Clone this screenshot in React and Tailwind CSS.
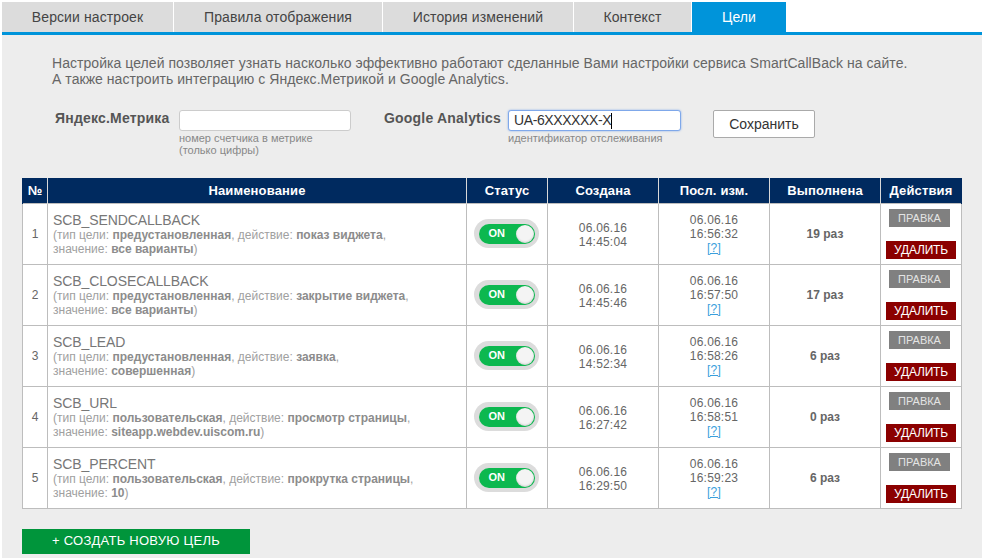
import React from 'react';

const tabs = [
  { label: 'Версии настроек', width: 'w-[171px]' },
  { label: 'Правила отображения', width: 'w-[208px]' },
  { label: 'История изменений', width: 'w-[190px]' },
  { label: 'Контекст', width: 'w-[117px]' },
  { label: 'Цели', width: 'w-[94px]', active: true },
];

const goals = [
  { name: 'SCB_SENDCALLBACK', type: 'предустановленная', action: 'показ виджета', value: 'все варианты', created: '14:45:04', createdDate: '06.06.16', changed: '16:56:32', runs: '19' },
  { name: 'SCB_CLOSECALLBACK', type: 'предустановленная', action: 'закрытие виджета', value: 'все варианты', created: '14:45:46', createdDate: '06.06.16', changed: '16:57:50', runs: '17' },
  { name: 'SCB_LEAD', type: 'предустановленная', action: 'заявка', value: 'совершенная', created: '14:52:34', createdDate: '06.06.16', changed: '16:58:26', runs: '6' },
  { name: 'SCB_URL', type: 'пользовательская', action: 'просмотр страницы', value: 'siteapp.webdev.uiscom.ru', created: '16:27:42', createdDate: '06.06.16', changed: '16:58:51', runs: '0' },
  { name: 'SCB_PERCENT', type: 'пользовательская', action: 'прокрутка страницы', value: '10', created: '16:29:50', createdDate: '06.06.16', changed: '16:59:23', runs: '6' },
];

const headers = ['№', 'Наименование', 'Статус', 'Создана', 'Посл. изм.', 'Выполнена', 'Действия'];

function Toggle() {
  return (
    <div className="ml-[7px] flex h-[29px] w-[65px] items-center justify-center rounded-full bg-[#dcdcdc]">
      <div className="flex h-[20px] w-[56px] items-center justify-between rounded-full bg-[#0cb84f] pl-[10px] pr-[1px]">
        <span className="text-[11px] font-bold text-white">ON</span>
        <span className="h-[18px] w-[18px] rounded-full bg-[#f4f4f4] shadow-[inset_0_-1px_2px_rgba(0,0,0,0.15)]" />
      </div>
    </div>
  );
}

function GoalRow({ goal, index }) {
  return (
    <tr className="h-[61px] bg-white">
      <td className="border border-[#bdbdbd] text-center text-[12px] text-[#666]">{index + 1}</td>
      <td className="border border-[#bdbdbd] pl-[5px] pt-[2px] align-middle">
        <div className="text-[14px] leading-[15px] tracking-[-0.1px] text-[#777]">{goal.name}</div>
        <div className="text-[12px] leading-[14px] text-[#a0a0a0]">
          (тип цели: <b className="text-[#8c8c8c]">{goal.type}</b>, действие: <b className="text-[#8c8c8c]">{goal.action}</b>,
          <br />
          значение: <b className="text-[#8c8c8c]">{goal.value}</b>)
        </div>
      </td>
      <td className="border border-[#bdbdbd]">
        <Toggle />
      </td>
      <td className="border border-[#bdbdbd] pt-[2px] text-center text-[12px] leading-[14px] tracking-[0.2px] text-[#666]">
        {goal.createdDate}
        <br />
        {goal.created}
      </td>
      <td className="border border-[#bdbdbd] text-center text-[12px] leading-[14px] tracking-[0.2px] text-[#666]">
        06.06.16
        <br />
        {goal.changed}
        <br />
        <a href="#" className="text-[#3b9fdc] underline">[?]</a>
      </td>
      <td className="border border-[#bdbdbd] text-center text-[12px] font-bold text-[#666]">
        {goal.runs} раз
      </td>
      <td className="border border-[#bdbdbd] align-top">
        <div className="flex flex-col items-start pt-[5px]">
          <span className="ml-[8px] flex h-[18px] w-[61px] items-center justify-center bg-[#808080] pt-[1px] text-[11px] text-[#e4e4e4]">ПРАВКА</span>
          <span className="ml-[5px] mt-[14px] flex h-[18px] w-[70px] items-center justify-center bg-[#8b0000] text-[12px] tracking-[-0.2px] text-white">УДАЛИТЬ</span>
        </div>
      </td>
    </tr>
  );
}

export default function App() {
  return (
    <div className="h-[559px] w-[984px] bg-white pb-[1px] pl-[2px] pr-[2px] pt-[2px] font-['Liberation_Sans',Arial,sans-serif]">
      {/* Tabs */}
      <div className="flex h-[33px] gap-[1px] border-b-[3px] border-[#0094da]">
        {tabs.map((tab) => (
          <div
            key={tab.label}
            className={`flex h-[30px] items-center justify-center text-[14px] tracking-[0.1px] ${tab.width} ${tab.active ? 'bg-[#0094da] text-white' : 'bg-[#dcdcdc] text-[#444]'}`}
          >
            {tab.label}
          </div>
        ))}
      </div>

      <div className="h-[523px] bg-[#ededed] px-[20px]">
        {/* Description */}
        <p className="pl-[30px] pt-[20px] text-[14px] leading-[16px] tracking-[0.05px] text-[#666]">
          Настройка целей позволяет узнать насколько эффективно работают сделанные Вами настройки сервиса SmartCallBack на сайте.
          <br />
          А также настроить интеграцию с Яндекс.Метрикой и Google Analytics.
        </p>

        {/* Counters form */}
        <div className="mt-[23px] flex h-[68px] items-start">
          <label className="ml-[33px] w-[124px] text-[14px] font-bold leading-[16px] tracking-[0.2px] text-[#555]">Яндекс.Метрика</label>
          <div className="w-[172px]">
            <input className="block h-[21px] w-[172px] rounded-[3px] border border-[#ccc] bg-white" />
            <div className="mt-[1px] text-[11px] leading-[12px] text-[#888]">
              номер счетчика в метрике
              <br />
              (только цифры)
            </div>
          </div>
          <label className="ml-[33px] w-[124px] text-[14px] font-bold leading-[16px] tracking-[0.2px] text-[#555]">Google Analytics</label>
          <div className="w-[173px]">
            <div className="flex h-[21px] w-[173px] items-center rounded-[3px] border border-[#7fa8ea] bg-white pl-[5px] text-[14px] tracking-[-0.4px] text-[#333] shadow-[0_0_2px_#7fa8ea]">
              UA-6XXXXXX-X<span className="h-[16px] w-[1px] bg-black" />
            </div>
            <div className="mt-[1px] text-[11px] leading-[12px] text-[#888]">идентификатор отслеживания</div>
          </div>
          <button className="ml-[32px] h-[28px] w-[102px] rounded-[2px] border border-[#aaa] bg-white text-[14px] text-[#333]">Сохранить</button>
        </div>

        {/* Goals table */}
        <table className="w-[939px] table-fixed border-collapse">
          <colgroup>
            <col className="w-[25px]" />
            <col className="w-[419px]" />
            <col className="w-[81px]" />
            <col className="w-[111px]" />
            <col className="w-[111px]" />
            <col className="w-[111px]" />
            <col className="w-[81px]" />
          </colgroup>
          <thead>
            <tr className="h-[25px] bg-[#002a5f]">
              {headers.map((title) => (
                <th key={title} className="border-x border-[#d8d8d8] text-center text-[13px] font-bold tracking-[0.15px] text-white first:border-l-[#002a5f] last:border-r-[#002a5f]">
                  {title}
                </th>
              ))}
            </tr>
          </thead>
          <tbody>
            {goals.map((goal, index) => (
              <GoalRow key={goal.name} goal={goal} index={index} />
            ))}
          </tbody>
        </table>

        <button className="mt-[20px] h-[25px] w-[228px] bg-[#00953b] text-[13px] tracking-[0.25px] text-white">+ СОЗДАТЬ НОВУЮ ЦЕЛЬ</button>
      </div>
    </div>
  );
}
